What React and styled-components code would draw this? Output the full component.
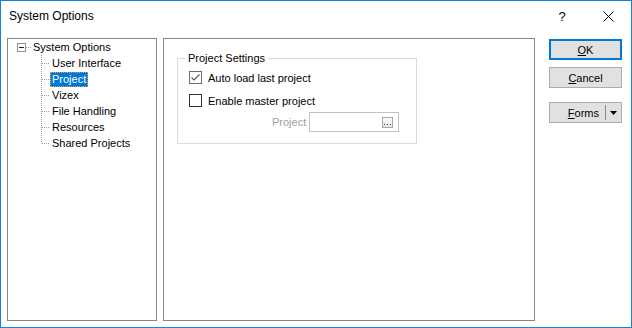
import React from "react";
import styled, { createGlobalStyle } from "styled-components";

const Global = createGlobalStyle`
  html, body { margin: 0; padding: 0; background: #fff; }
  body { font-family: "Liberation Sans", Arial, sans-serif; }
  * { box-sizing: border-box; }
`;

const Window = styled.div`
  width: 632px;
  height: 328px;
  border: 1px solid #1883d7;
  background: #fff;
  display: flex;
  flex-direction: column;
  font-family: "Liberation Sans", Arial, sans-serif;
  font-size: 11px;
  color: #000;
`;

const TitleBar = styled.div`
  height: 30px;
  display: flex;
  align-items: center;
  padding-left: 8px;
  flex: none;
`;

const TitleText = styled.div`
  font-size: 12px;
  flex: 1;
`;

const TitleButton = styled.div`
  width: 46px;
  height: 30px;
  display: flex;
  align-items: center;
  justify-content: center;
  font-size: 13px;
`;

const Body = styled.div`
  flex: 1;
  display: flex;
  align-items: flex-start;
  padding: 7px 0 6px 6px;
`;

const TreePanel = styled.div`
  width: 150px;
  height: 283px;
  border: 1px solid #828790;
  background: #fff;
  flex: none;
`;

const RootRow = styled.div`
  height: 16px;
  display: flex;
  align-items: center;
  padding-left: 9px;
`;

const Expander = styled.div`
  width: 9px;
  height: 9px;
  border: 1px solid #919191;
  display: flex;
  align-items: center;
  justify-content: center;
  &::after {
    content: "";
    width: 5px;
    height: 1px;
    background: #222;
  }
`;

const Label = styled.span`
  line-height: 13px;
  padding: 0 1px;
  border: 1px dotted ${(p) => (p.$selected ? "#e3a247" : "transparent")};
  background: ${(p) => (p.$selected ? "#0078d7" : "transparent")};
  color: ${(p) => (p.$selected ? "#fff" : "#000")};
  white-space: nowrap;
`;

const ChildRow = styled.div`
  height: 16px;
  display: flex;
  align-items: center;
  padding-left: 29px;
`;

const Content = styled.div`
  width: 372px;
  height: 283px;
  margin-left: 6px;
  border: 1px solid #828790;
  background: #fff;
  padding: 12px 0 0 13px;
  flex: none;
`;

const Group = styled.fieldset`
  width: 240px;
  height: 93px;
  margin: 0;
  min-width: 0;
  border: 1px solid #dcdcdc;
  padding: 1px 0 0 11px;
`;

const Legend = styled.legend`
  line-height: 14px;
  padding: 0 3px;
  margin-left: -4px;
`;

const CheckRow = styled.div`
  height: 23px;
  display: flex;
  align-items: center;
  gap: 6px;
`;

const Box = styled.span`
  width: 13px;
  height: 13px;
  border: 1px solid ${(p) => p.$color};
  background: #fff;
  display: flex;
  align-items: center;
  justify-content: center;
`;

const FieldRow = styled.div`
  height: 20px;
  display: flex;
  align-items: center;
  padding-left: 83px;
  gap: 3px;
`;

const FieldLabel = styled.span`
  color: #a0a0a0;
`;

const Input = styled.div`
  width: 90px;
  height: 20px;
  border: 1px solid #c2c2c2;
  background: #fff;
  display: flex;
  align-items: center;
  justify-content: flex-end;
  padding-right: 5px;
`;

const EllipsisBtn = styled.span`
  width: 11px;
  height: 11px;
  border: 1px solid #a8a8a8;
  background: linear-gradient(#fdfdfd, #e2e2e2);
  display: flex;
  align-items: flex-end;
  justify-content: center;
  padding-bottom: 1px;
`;

const ButtonCol = styled.div`
  width: 73px;
  margin-left: 14px;
  padding-top: 1px;
  display: flex;
  flex-direction: column;
  flex: none;
`;

const Button = styled.div`
  height: 21px;
  background: #e1e1e1;
  border: ${(p) => (p.$default ? "2px solid #0078d7" : "1px solid #adadad")};
  display: flex;
  align-items: center;
  justify-content: center;
  margin-top: ${(p) => p.$gap || 0}px;
`;

const SplitButton = styled.div`
  height: 21px;
  background: #e1e1e1;
  border: 1px solid #adadad;
  display: flex;
  align-items: center;
  margin-top: 14px;
`;

const SplitMain = styled.div`
  flex: 1;
  display: flex;
  justify-content: flex-end;
  padding-right: 6px;
`;

const SplitSep = styled.div`
  width: 1px;
  height: 15px;
  background: #8a8a8a;
`;

const SplitArrow = styled.div`
  width: 15px;
  display: flex;
  justify-content: center;
  align-items: center;
`;

function Connector({ last }) {
  return (
    <svg width="13" height="16" style={{ flex: "none" }}>
      <line x1="4.5" y1="0" x2="4.5" y2={last ? 8.5 : 16} stroke="#a0a0a0" strokeDasharray="1 1" />
      <line x1="5" y1="8.5" x2="12" y2="8.5" stroke="#a0a0a0" strokeDasharray="1 1" />
    </svg>
  );
}

const children = ["User Interface", "Project", "Vizex", "File Handling", "Resources", "Shared Projects"];

export default function App() {
  return (
    <>
      <Global />
      <Window>
        <TitleBar>
          <TitleText>System Options</TitleText>
          <TitleButton>?</TitleButton>
          <TitleButton>
            <svg width="11" height="11" viewBox="0 0 11 11">
              <path d="M0.5 0.5 L10.5 10.5 M10.5 0.5 L0.5 10.5" stroke="#000" strokeWidth="1" fill="none" />
            </svg>
          </TitleButton>
        </TitleBar>
        <Body>
          <TreePanel>
            <RootRow>
              <Expander />
              <svg width="5" height="16" style={{ flex: "none" }}>
                <line x1="0" y1="8.5" x2="5" y2="8.5" stroke="#a0a0a0" strokeDasharray="1 1" />
              </svg>
              <Label>System Options</Label>
            </RootRow>
            {children.map((c, i) => (
              <ChildRow key={c}>
                <Connector last={i === children.length - 1} />
                <Label $selected={c === "Project"}>{c}</Label>
              </ChildRow>
            ))}
          </TreePanel>
          <Content>
            <Group>
              <Legend>Project Settings</Legend>
              <CheckRow>
                <Box $color="#6d6d6d">
                  <svg width="11" height="11" viewBox="0 0 11 11">
                    <path d="M1.5 5.5 L4 8 L9.5 2.5" stroke="#5a5a5a" strokeWidth="1.2" fill="none" />
                  </svg>
                </Box>
                <span>Auto load last project</span>
              </CheckRow>
              <CheckRow>
                <Box $color="#333" />
                <span>Enable master project</span>
              </CheckRow>
              <FieldRow>
                <FieldLabel>Project</FieldLabel>
                <Input>
                  <EllipsisBtn>
                    <svg width="7" height="2" viewBox="0 0 7 2">
                      <rect x="0" y="0" width="1" height="1" fill="#555" />
                      <rect x="3" y="0" width="1" height="1" fill="#555" />
                      <rect x="6" y="0" width="1" height="1" fill="#555" />
                    </svg>
                  </EllipsisBtn>
                </Input>
              </FieldRow>
            </Group>
          </Content>
          <ButtonCol>
            <Button $default>
              <span><u>O</u>K</span>
            </Button>
            <Button $gap={7}>
              <span><u>C</u>ancel</span>
            </Button>
            <SplitButton>
              <SplitMain>
                <span><u>F</u>orms</span>
              </SplitMain>
              <SplitSep />
              <SplitArrow>
                <svg width="7" height="4" viewBox="0 0 7 4">
                  <path d="M0 0 H7 L3.5 4 Z" fill="#000" />
                </svg>
              </SplitArrow>
            </SplitButton>
          </ButtonCol>
        </Body>
      </Window>
    </>
  );
}
